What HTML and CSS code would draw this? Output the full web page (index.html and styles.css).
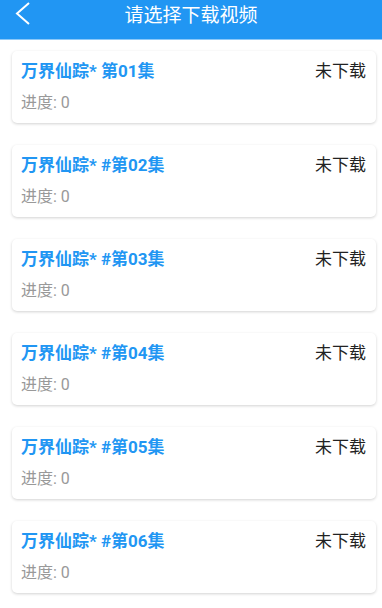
FILE: index.html
```html
<html>
  <head>
    <meta charset="utf-8">
    <link rel="stylesheet" href="styles.css">
  </head>
  <body>
    <div class="header">
      <div class="back">
        <svg width="20" height="28" viewBox="0 0 20 28"><polyline points="15,3 3,13.5 15,24" fill="none" stroke="#fff" stroke-width="2"/></svg>
      </div>
      <div class="title">请选择下载视频</div>
      <div></div>
    </div>
    <div class="list">
      <div class="card">
        <div class="row"><span class="name">万界仙踪* 第01集</span><span class="state">未下载</span></div>
        <div class="progress">进度: 0</div>
      </div>
      <div class="card">
        <div class="row"><span class="name">万界仙踪* #第02集</span><span class="state">未下载</span></div>
        <div class="progress">进度: 0</div>
      </div>
      <div class="card">
        <div class="row"><span class="name">万界仙踪* #第03集</span><span class="state">未下载</span></div>
        <div class="progress">进度: 0</div>
      </div>
      <div class="card">
        <div class="row"><span class="name">万界仙踪* #第04集</span><span class="state">未下载</span></div>
        <div class="progress">进度: 0</div>
      </div>
      <div class="card">
        <div class="row"><span class="name">万界仙踪* #第05集</span><span class="state">未下载</span></div>
        <div class="progress">进度: 0</div>
      </div>
      <div class="card">
        <div class="row"><span class="name">万界仙踪* #第06集</span><span class="state">未下载</span></div>
        <div class="progress">进度: 0</div>
      </div>
    </div>
  </body>
</html>
```

FILE: styles.css
```css
body { margin:0; background:#fff; font-family:Roboto, "Noto Sans CJK SC", sans-serif; }
.header { height:40px; background:#2196f3; display:grid; grid-template-columns:1fr auto 1fr; border-bottom:1px solid #8cc8f8; box-sizing:border-box; }
.back { padding-left:14px; }
.back svg { display:block; }
.title { color:#fff; font-size:19px; line-height:31px; }
.list { padding:11px 6px 0 12px; }
.card { background:#fff; border-radius:5px; box-shadow:0 1px 3px rgba(0,0,0,0.18); padding:10px 10px 10px 9px; margin-bottom:22px; }
.row { display:flex; justify-content:space-between; line-height:20px; }
.name { color:#2196f3; font-size:17px; font-weight:bold; }
.state { color:#222; font-size:17px; }
.progress { color:#999; font-size:16px; line-height:20px; margin-top:12px; }
```
